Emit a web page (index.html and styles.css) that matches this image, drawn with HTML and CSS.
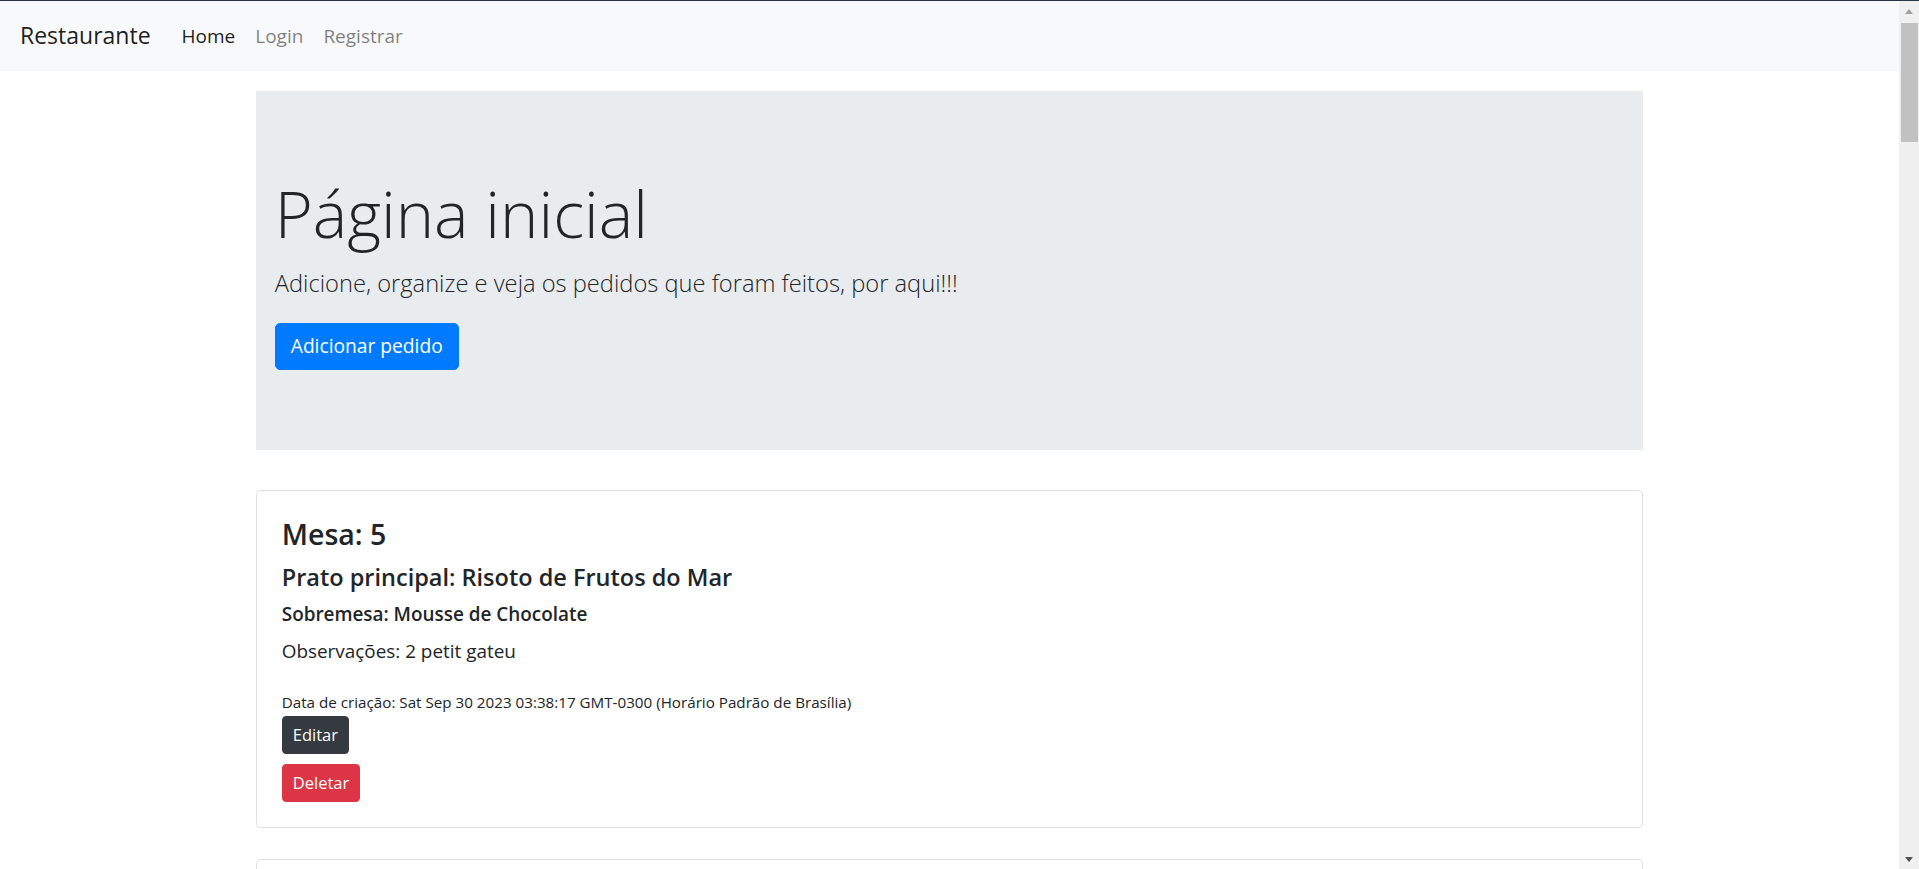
FILE: index.html
```html
<!DOCTYPE html>
<html lang="pt-BR">
<head>
<meta charset="utf-8">
<title>Restaurante</title>
<link rel="stylesheet" href="styles.css">
</head>
<body>
<div class="app">
  <div class="viewport">
    <nav class="navbar">
      <a class="navbar-brand" href="#">Restaurante</a>
      <ul class="navbar-nav">
        <li><a class="nav-link active" href="#">Home</a></li>
        <li><a class="nav-link" href="#">Login</a></li>
        <li><a class="nav-link" href="#">Registrar</a></li>
      </ul>
    </nav>
    <main class="container">
      <section class="jumbotron">
        <h1 class="display-4">Página inicial</h1>
        <p class="lead">Adicione, organize e veja os pedidos que foram feitos, por aqui!!!</p>
        <a class="btn btn-primary" href="#">Adicionar pedido</a>
      </section>
      <div class="orders">
        <article class="card">
          <div class="card-body">
            <h4 class="card-title">Mesa: 5</h4>
            <h5 class="card-subtitle">Prato principal: Risoto de Frutos do Mar</h5>
            <h6 class="card-dessert">Sobremesa: Mousse de Chocolate</h6>
            <p class="card-text">Observações: 2 petit gateu</p>
            <p class="card-date"><small>Data de criação: Sat Sep 30 2023 03:38:17 GMT-0300 (Horário Padrão de Brasília)</small></p>
            <div class="actions">
              <a class="btn btn-sm btn-dark" href="#">Editar</a>
              <a class="btn btn-sm btn-danger" href="#">Deletar</a>
            </div>
          </div>
        </article>
        <article class="card card-next"></article>
      </div>
    </main>
  </div>
  <div class="scrollbar">
    <div class="sb-arrow sb-up"></div>
    <div class="sb-track"><div class="sb-thumb"></div></div>
    <div class="sb-arrow sb-down"></div>
  </div>
</div>
</body>
</html>
```
FILE: styles.css
```css
* { box-sizing: border-box; }
html, body { margin: 0; padding: 0; height: 869px; overflow: hidden; }
body {
  font-family: "Segoe UI", "Open Sans", "Noto Sans", sans-serif;
  font-size: 19px;
  line-height: 30px;
  color: #212529;
  background: #fff;
}
a { text-decoration: none; }

.app {
  display: flex;
  height: 869px;
  border-top: 1px solid #2b3645;
}
.viewport {
  flex: 1;
  overflow: hidden;
  min-width: 0;
}

/* navbar */
.navbar {
  display: flex;
  align-items: center;
  height: 70px;
  padding: 10px 20px;
  background: #f8f9fa;
}
.navbar-brand {
  font-size: 23px;
  line-height: 37.5px;
  color: rgba(0,0,0,.9);
  margin-right: 21px;
}
.navbar-nav {
  display: flex;
  list-style: none;
  margin: 0;
  padding: 0;
}
.nav-link {
  display: block;
  padding: 10px 10px;
  font-size: 19px;
  line-height: 30px;
  color: rgba(0,0,0,.5);
}
.nav-link.active { color: rgba(0,0,0,.9); }

/* container */
.container {
  width: 1387.5px;
  margin: 0 auto;
}

.jumbotron {
  margin-top: 20px;
  margin-bottom: 40px;
  padding: 80px 19px;
  background: #e9ecef;
}
.display-4 {
  margin: 0 0 10px;
  font-size: 65px;
  font-weight: 300;
  line-height: 84px;
}
.lead {
  margin: 0 0 20px;
  font-size: 23.7px;
  font-weight: 300;
  line-height: 37.5px;
}

.btn {
  display: inline-block;
  border: 1.25px solid transparent;
  border-radius: 5px;
  padding: 7.5px 15px;
  font-size: 19.2px;
  line-height: 30px;
  color: #fff;
}
.btn-primary { background: #007bff; border-color: #007bff; }
.btn-sm {
  padding: 5px 10px;
  font-size: 16.5px;
  line-height: 26px;
  border-radius: 4px;
}
.btn-dark { background: #343a40; border-color: #343a40; }
.btn-danger { background: #dc3545; border-color: #dc3545; }

/* cards */
.orders {
  display: flex;
  flex-direction: column;
  gap: 31px;
}
.card {
  border: 1px solid rgba(0,0,0,.125);
  border-radius: 5px;
  background: #fff;
}
.card-next { min-height: 200px; flex: none; }
.card-body { padding: 25px; }
.card-title, .card-subtitle, .card-dessert {
  margin: 0 0 10px;
  font-weight: 600;
}
.card-title { font-size: 28.5px; line-height: 36px; }
.card-subtitle { font-size: 23.5px; line-height: 30px; }
.card-dessert { font-size: 18.9px; line-height: 24px; }
.card-text { margin: 0 0 20px; font-size: 18.9px; line-height: 30px; }
.card-date { margin: 0; height: 30px; font-size: 20px; line-height: 30px; }
.card-date small { font-size: 15.2px; line-height: 16px; }
.actions {
  display: flex;
  flex-direction: column;
  align-items: flex-start;
  gap: 10px;
}

/* scrollbar */
.scrollbar {
  width: 20px;
  display: flex;
  flex-direction: column;
  background: #f0f0f0;
}
.sb-arrow {
  height: 20px;
  display: flex;
  justify-content: center;
  align-items: center;
  flex: none;
}
.sb-up::before {
  content: "";
  border-left: 4.5px solid transparent;
  border-right: 4.5px solid transparent;
  border-bottom: 5px solid #a3a3a3;
}
.sb-down::before {
  content: "";
  border-left: 4.5px solid transparent;
  border-right: 4.5px solid transparent;
  border-top: 5px solid #505050;
}
.sb-track {
  flex: 1;
  padding: 2px 1px 0 2px;
}
.sb-thumb {
  height: 119px;
  background: #c1c1c1;
}
```
